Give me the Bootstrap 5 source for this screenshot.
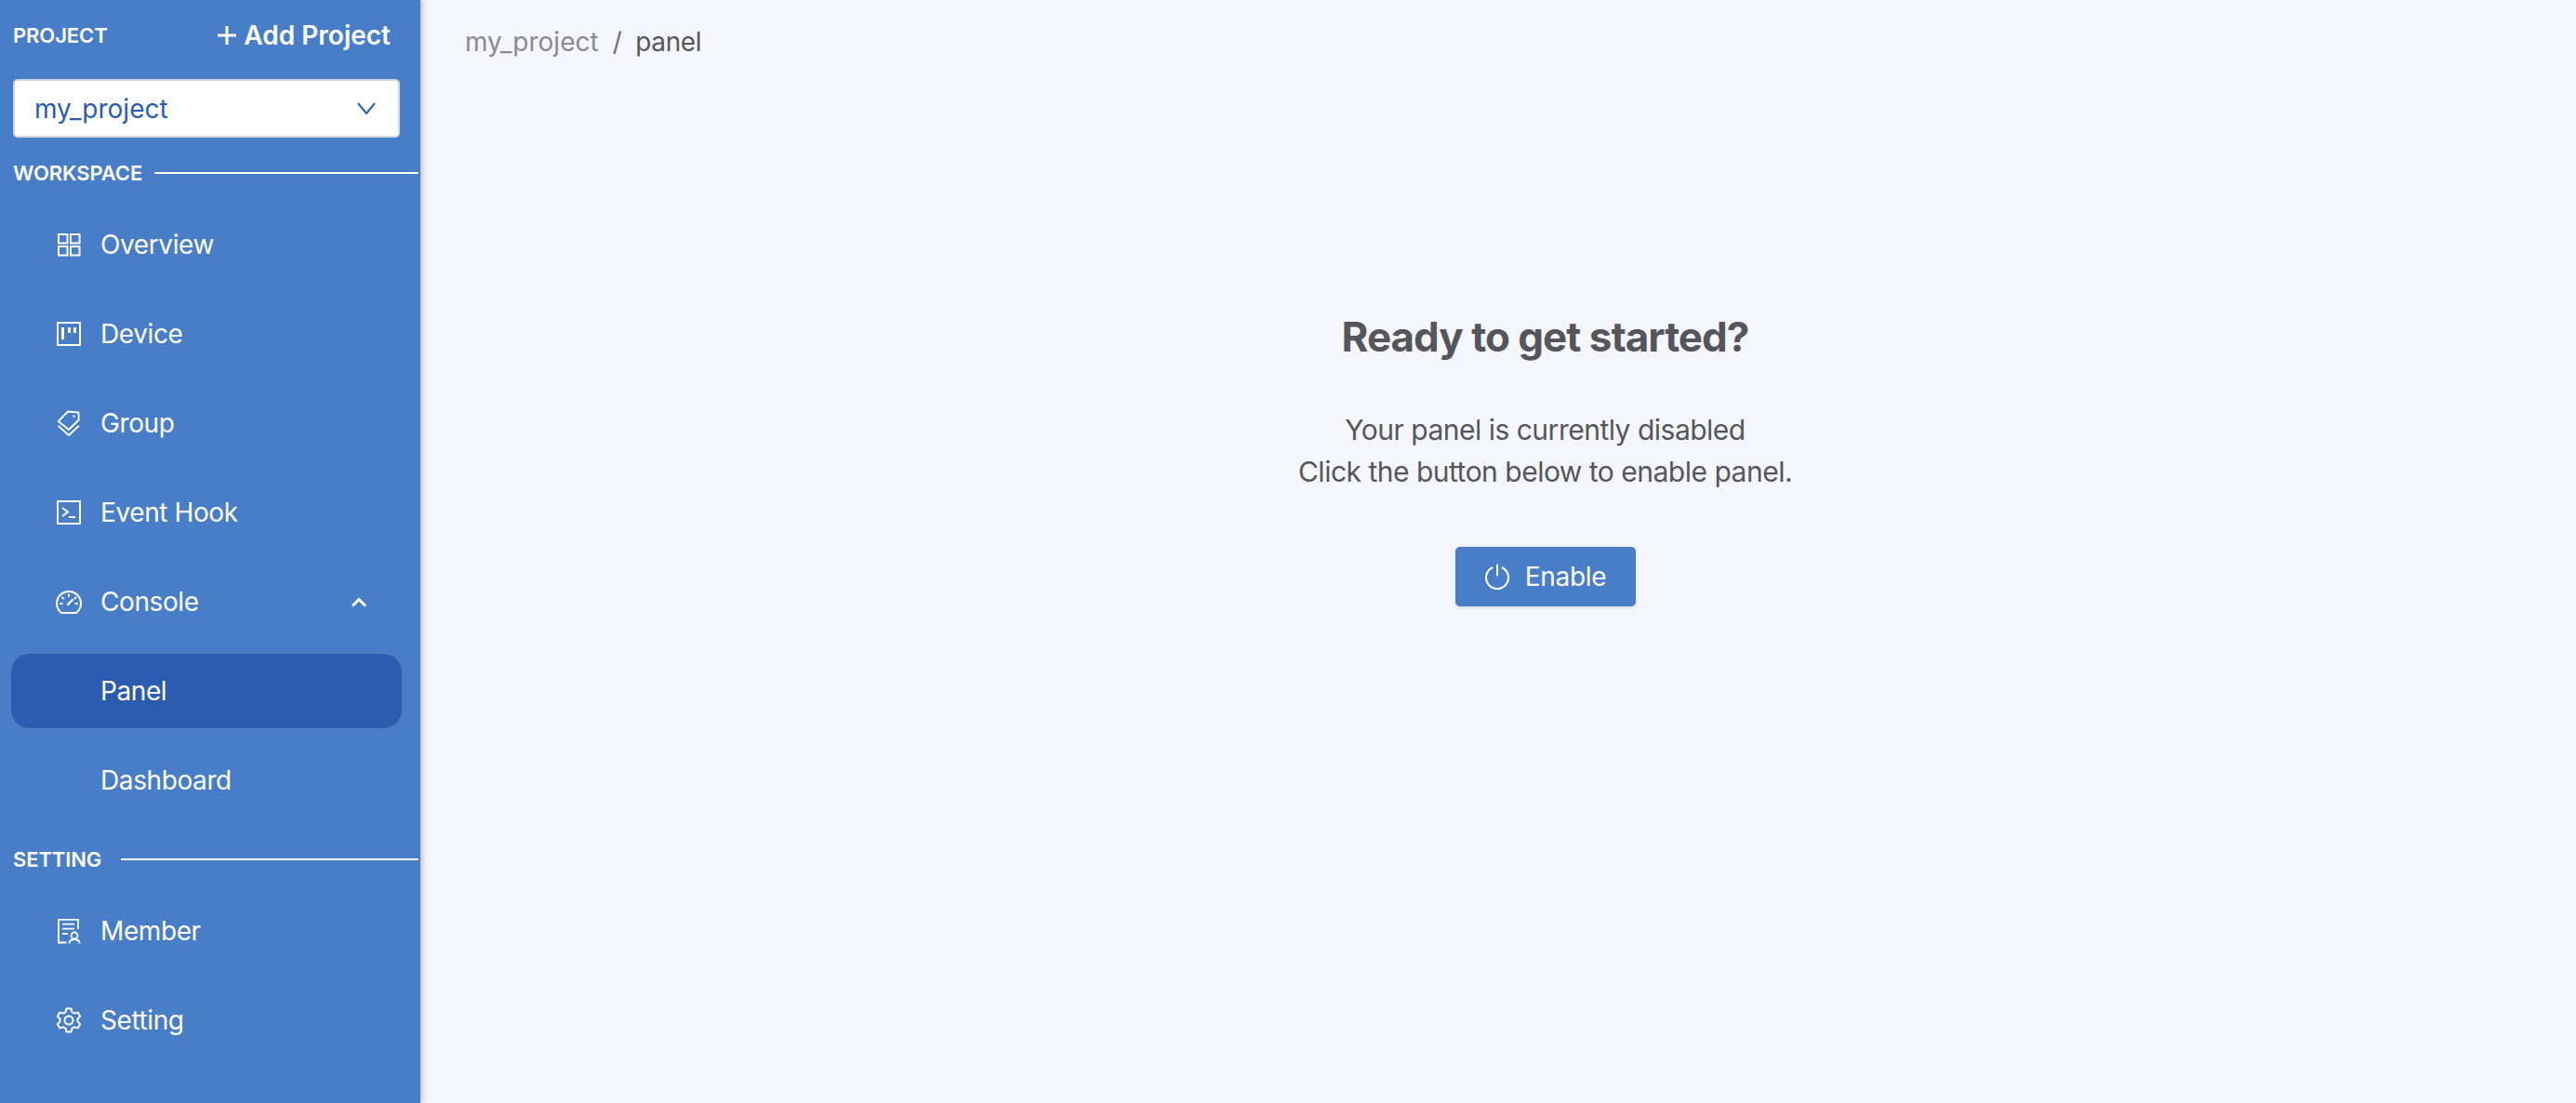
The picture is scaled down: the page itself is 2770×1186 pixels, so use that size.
<!DOCTYPE html>
<html lang="en">
<head>
    <meta charset="UTF-8">
    <title>panel</title>
    <link rel="stylesheet" href="https://cdn.jsdelivr.net/npm/bootstrap@5.3.3/dist/css/bootstrap.min.css">
    <style>
        html, body { height: 100%; }
        body { font-family: Inter, "Liberation Sans", sans-serif; background: #f5f6fb; overflow: hidden; }
        .app-shell { height: 1186px; }
        .side-bar { width: 452px; flex: none; background: #487dc8; color: #fff; box-shadow: 2px 0 6px rgba(0,0,0,.25); }
        .head-row { height: 85px; padding: 0 32px 10px 14px; }
        .head-label { font-size: 22px; font-weight: 600; line-height: 1; letter-spacing: -.1px; }
        .add-link { font-size: 28px; font-weight: 600; color: #fff; text-decoration: none; line-height: 1; }
        .add-link svg { margin-right: 8px; }
        .project-pick { height: 63px; margin: 0 22px 0 14px; padding: 0 24px 0 21px; background: #fff; border: 2px solid #d3d6dc; border-radius: 5px; color: #2b5cb0; font-size: 28px; }
        .section-row { padding: 0 2px 0 14px; gap: 13px; }
        .section-row hr { flex: 1; margin: 0; border: 0; height: 2px; background: #fff; opacity: 1; }
        .sec-work { height: 75px; }
        .sec-set { height: 58px; margin-bottom: 8px; gap: 21px; }
        .menu-row { height: 80px; margin: 0 20px 16px 12px; padding: 0 38px 0 48px; border-radius: 20px; color: #fff; font-size: 28px; letter-spacing: -.4px; text-decoration: none; }
        .menu-row.sel { background: #2b5cb0; }
        .menu-ico { width: 28px; height: 28px; flex: none; margin-right: 20px; }
        .menu-gap { padding-left: 96px; }
        .crumbs { padding: 26px 0 0 48px; font-size: 28px; line-height: 38px; }
        .crumbs .breadcrumb { margin: 0; --bs-breadcrumb-item-padding-x: 15px; --bs-breadcrumb-divider-color: #6e6e73; }
        .crumbs .breadcrumb-item { color: #8a8a8f; }
        .crumbs .breadcrumb-item.active { color: #55565b; letter-spacing: -.4px; }
        .empty-box { padding-left: 101px; padding-top: 270px; color: #55565b; }
        .empty-box h1 { font-size: 44px; font-weight: 700; line-height: 56px; letter-spacing: -1px; margin: 0 0 50px; }
        .empty-box p { font-size: 30px; line-height: 45px; letter-spacing: -.5px; margin: 0 0 58px; }
        .enable-btn { height: 64px; width: 194px; padding: 0; background: #487dc8; border: 0; border-radius: 5px; color: #fff; font-size: 28px; letter-spacing: -.3px; box-shadow: 0 2px 4px rgba(0,0,0,.1); }
        .enable-btn svg { margin-right: 16px; }
    </style>
</head>
<body>
    <div class="app-shell d-flex">
        <aside class="side-bar d-flex flex-column">
            <div class="head-row d-flex align-items-center justify-content-between">
                <span class="head-label">PROJECT</span>
                <a class="add-link d-flex align-items-center" href="#">
                    <svg width="20" height="20" viewBox="0 0 20 20" fill="none" stroke="#fff" stroke-width="3"><path d="M10 0v20M0 10h20"/></svg>
                    Add Project
                </a>
            </div>
            <div class="project-pick d-flex align-items-center justify-content-between">
                <span>my_project</span>
                <svg width="20" height="14" viewBox="0 0 20 14" fill="none" stroke="#2b5cb0" stroke-width="2"><path d="M1 1l9 11 9-11"/></svg>
            </div>

            <div class="section-row sec-work d-flex align-items-center">
                <span class="head-label">WORKSPACE</span><hr>
            </div>

            <a class="menu-row d-flex align-items-center" href="#">
                <svg class="menu-ico" viewBox="0 0 28 28" fill="none" stroke="#fff" stroke-width="2"><rect x="3" y="3" width="9.500" height="9.500"/><rect x="16" y="3" width="9.500" height="9.500"/><rect x="3" y="16" width="9.500" height="9.500"/><rect x="16" y="16" width="9.500" height="9.500"/></svg>
                Overview
            </a>
            <a class="menu-row d-flex align-items-center" href="#">
                <svg class="menu-ico" viewBox="0 0 28 28" fill="none" stroke="#fff" stroke-width="2"><rect x="2" y="2" width="24" height="24"/><path d="M7.500 7v13" stroke-width="3"/><path d="M14.500 7v6M20.500 7v6" stroke-width="3"/></svg>
                Device
            </a>
            <a class="menu-row d-flex align-items-center" href="#">
                <svg class="menu-ico" viewBox="0 0 28 28" fill="none" stroke="#fff" stroke-width="1.800" stroke-linejoin="round"><path d="M2.700 12L13 1.500l11.500 1 .2 8L14 21z"/><path d="M2.700 17L14 27l10.700-10"/><circle cx="19.500" cy="6.500" r="1.300" fill="#fff" stroke="none"/></svg>
                Group
            </a>
            <a class="menu-row d-flex align-items-center" href="#">
                <svg class="menu-ico" viewBox="0 0 28 28" fill="none" stroke="#fff" stroke-width="2"><rect x="2" y="2" width="24" height="24"/><path d="M7 9l6 4.500-6 4.500M14 19h7"/></svg>
                Event Hook
            </a>
            <a class="menu-row d-flex align-items-center" href="#">
                <svg class="menu-ico" viewBox="0 0 28 28" fill="none" stroke="#fff" stroke-width="2"><path d="M6 26h16c3-2.500 5-6 5-10 0-7.200-5.800-13-13-13S1 8.800 1 16c0 4 2 7.500 5 10z"/><path d="M13 17l5-5" stroke-width="2.400" stroke-linecap="round"/><path d="M14 6.500V8M7 9.500l1 1M21.500 9.500l-1 1M5 16h1.500M21.500 16H23" stroke-linecap="round"/></svg>
                Console
                <svg class="ms-auto" width="16" height="11" viewBox="0 0 16 11" fill="none" stroke="#fff" stroke-width="3"><path d="M1 9.500l7-7 7 7"/></svg>
            </a>
            <a class="menu-row menu-gap sel d-flex align-items-center" href="#">Panel</a>
            <a class="menu-row menu-gap d-flex align-items-center" href="#">Dashboard</a>

            <div class="section-row sec-set d-flex align-items-center">
                <span class="head-label">SETTING</span><hr>
            </div>

            <a class="menu-row d-flex align-items-center" href="#">
                <svg class="menu-ico" viewBox="0 0 28 28" fill="none" stroke="#fff" stroke-width="1.800"><path d="M11.500 26.500H3V1.800h21V12"/><path d="M7 6.700h13M7 11.700h13M7 17h6"/><circle cx="20" cy="19" r="3.500"/><path d="M14.300 27.500c.4-3 2.700-4.500 5.700-4.500s5.300 1.500 5.700 4.500"/></svg>
                Member
            </a>
            <a class="menu-row d-flex align-items-center" href="#">
                <svg class="menu-ico" viewBox="0 0 28 28" fill="none" stroke="#fff" stroke-width="2" stroke-linejoin="round"><path d="M11.500 1.500h5l.9 3.600 2.700 1.500 3.600-1 2.500 4.300-2.700 2.600v3l2.700 2.600-2.500 4.300-3.600-1-2.700 1.500-.9 3.600h-5l-.9-3.600-2.700-1.500-3.600 1-2.500-4.300 2.700-2.600v-3L1.800 9.900l2.500-4.300 3.600 1 2.700-1.500z"/><circle cx="14" cy="14" r="4.500"/></svg>
                Setting
            </a>
        </aside>

        <main class="flex-grow-1">
            <nav class="crumbs">
                <ol class="breadcrumb">
                    <li class="breadcrumb-item">my_project</li>
                    <li class="breadcrumb-item active">panel</li>
                </ol>
            </nav>
            <div class="empty-box text-center">
                <h1>Ready to get started?</h1>
                <p>Your panel is currently disabled<br>Click the button below to enable panel.</p>
                <button class="btn enable-btn d-inline-flex align-items-center justify-content-center">
                    <svg width="28" height="28" viewBox="0 0 28 28" fill="none" stroke="#fff" stroke-width="2" stroke-linecap="round"><path d="M8.500 4.500a12 12 0 1 0 11 0"/><path d="M14 1.500v11"/></svg>
                    Enable
                </button>
            </div>
        </main>
    </div>
    <script src="https://cdn.jsdelivr.net/npm/bootstrap@5.3.3/dist/js/bootstrap.bundle.min.js"></script>
</body>
</html>
